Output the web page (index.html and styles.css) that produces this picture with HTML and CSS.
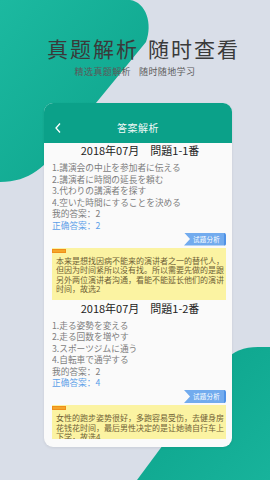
FILE: index.html
```html
<!DOCTYPE html>
<html lang="zh-CN">
<head>
<meta charset="utf-8">
<title>答案解析</title>
<link rel="stylesheet" href="styles.css">
</head>
<body>
<div class="screen">
  <svg class="bg" width="270" height="480" viewBox="0 0 270 480" xmlns="http://www.w3.org/2000/svg">
    <defs>
      <linearGradient id="g1" x1="0" y1="0" x2="1" y2="1">
        <stop offset="0" stop-color="#1cb9a0"/>
        <stop offset="1" stop-color="#0ca28a"/>
      </linearGradient>
      <linearGradient id="g2" x1="0" y1="0" x2="1" y2="1">
        <stop offset="0" stop-color="#0aa189"/>
        <stop offset="1" stop-color="#18b39b"/>
      </linearGradient>
    </defs>
    <path d="M0,0 H130 C146,2 153,24 146,42 L64,142 C46,166 30,182 0,182 Z" fill="url(#g1)"/>
    <path d="M270,347 V480 H137 L226,360 C233,351 244,347 258,347 Z" fill="url(#g2)"/>
  </svg>

  <div class="content">
    <h1 class="hero-title"><span>真题解析</span><span>随时查看</span></h1>
    <p class="hero-sub"><span>精选真题解析</span><span>随时随地学习</span></p>

    <div class="card">
      <div class="card-head">
        <svg class="back" width="8" height="12" viewBox="0 0 8 12"><polyline points="6,1.5 2,6 6,10.5" fill="none" stroke="#fff" stroke-width="1.3"/></svg>
        <span class="head-title">答案解析</span>
      </div>
      <div class="card-body">
        <div class="scroll">
          <div class="q-title">2018年07月　問題1-1番</div>
          <ul class="opts" lang="ja">
            <li>1.講演会の中止を参加者に伝える</li>
            <li>2.講演者に時間の延長を頼む</li>
            <li>3.代わりの講演者を探す</li>
            <li>4.空いた時間にすることを決める</li>
          </ul>
          <div class="ans">我的答案：2</div>
          <div class="ans correct">正确答案：2</div>
          <div class="tag-row"><span class="tag">试题分析</span></div>
          <div class="note">
            <div class="note-label"></div>
            <p class="note-text">本来是想找因病不能来的演讲者之一的替代人，<br>但因为时间紧所以没有找。所以需要先做的是跟<br>另外两位演讲者沟通，看能不能延长他们的演讲<br>时间，故选2</p>
          </div>

          <div class="q-title">2018年07月　問題1-2番</div>
          <ul class="opts" lang="ja">
            <li>1.走る姿勢を変える</li>
            <li>2.走る回数を増やす</li>
            <li>3.スポーツジムに通う</li>
            <li>4.自転車で通学する</li>
          </ul>
          <div class="ans">我的答案：2</div>
          <div class="ans correct">正确答案：4</div>
          <div class="tag-row"><span class="tag">试题分析</span></div>
          <div class="note">
            <div class="note-label"></div>
            <p class="note-text">女性的跑步姿势很好，多跑容易受伤，去健身房<br>花钱花时间，最后男性决定的是让她骑自行车上<br>下学，故选4</p>
          </div>
        </div>
      </div>
    </div>
  </div>
</div>
</body>
</html>
```

FILE: styles.css
```css
* { box-sizing: border-box; }
html, body { margin: 0; padding: 0; }
body {
  width: 270px;
  height: 480px;
  overflow: hidden;
  background: #d9dee8;
  font-family: "Noto Sans CJK SC", "Noto Sans", sans-serif;
}
.screen {
  position: relative;
  width: 270px;
  height: 480px;
  overflow: hidden;
}
.bg {
  position: absolute;
  left: 0;
  top: 0;
  z-index: 0;
}
.content {
  position: relative;
  z-index: 1;
  display: flex;
  flex-direction: column;
  padding-top: 35px;
}
.hero-title {
  margin: 0;
  display: flex;
  justify-content: center;
  gap: 9px;
  padding-left: 17px;
  font-size: 21px;
  line-height: 26px;
  font-weight: 400;
  letter-spacing: 2px;
  color: #3a3a3a;
}
.hero-sub {
  margin: 4px 0 0;
  display: flex;
  justify-content: center;
  gap: 8px;
  font-size: 9px;
  line-height: 14px;
  letter-spacing: 0.4px;
  color: #5a5a5a;
}
.card {
  margin: 24px 0 0 44px;
  width: 188px;
  height: 344px;
  background: #fafafa;
  border-radius: 9px;
  overflow: hidden;
  display: flex;
  flex-direction: column;
  box-shadow: 0 1px 3px rgba(0,0,0,0.08);
}
.card-head {
  height: 40px;
  flex: none;
  background: #0ba189;
  display: flex;
  align-items: center;
  justify-content: center;
  position: relative;
}
.back {
  position: absolute;
  left: 10px;
  top: 19px;
}
.head-title {
  color: #ffffff;
  font-size: 10px;
  line-height: 14px;
  margin-top: 10px;
  letter-spacing: 0.5px;
  opacity: 0.95;
}
.card-body {
  flex: 1;
  padding: 0 6px 8px 8px;
  display: flex;
  flex-direction: column;
  min-height: 0;
}
.scroll {
  flex: 1;
  overflow: hidden;
  min-height: 0;
}
.q-title {
  text-align: center;
  font-size: 11px;
  line-height: 14px;
  color: #222;
  margin-top: 1px;
  padding-left: 2px;
}
.scroll > .q-title:first-child { margin-top: 0; }
.opts {
  list-style: none;
  margin: 5px 0 0;
  padding: 0;
  font-family: "Noto Sans CJK JP", "Noto Sans CJK SC", sans-serif;
}
.opts li, .ans {
  font-size: 8.7px;
  line-height: 11.5px;
  color: #7d7d7d;
  white-space: nowrap;
}
.ans.correct { color: #5c9fe8; }
.tag-row {
  display: flex;
  justify-content: flex-end;
  margin-top: 1.5px;
}
.tag {
  display: inline-flex;
  align-items: center;
  justify-content: center;
  width: 42px;
  height: 13px;
  padding-left: 5px;
  background: #72abee;
  border-right: 2px solid #4f92e6;
  border-radius: 0 2px 2px 0;
  clip-path: polygon(0 0, 100% 0, 100% 100%, 0 100%, 6px 50%);
  color: #ffffff;
  font-size: 6.5px;
  line-height: 13px;
  letter-spacing: 0.3px;
}
.note {
  margin-top: 2px;
  background: #fbf3a2;
  padding: 1px 4px 6px 4px;
}
.note-label {
  width: 14px;
  height: 4px;
  margin-left: -4px;
  margin-bottom: 3px;
  background: #f3a62a;
  border: 1px solid #f08f18;
}
.note-text {
  margin: 0;
  font-size: 8px;
  line-height: 9.5px;
  color: #6f6136;
  white-space: nowrap;
}
```
